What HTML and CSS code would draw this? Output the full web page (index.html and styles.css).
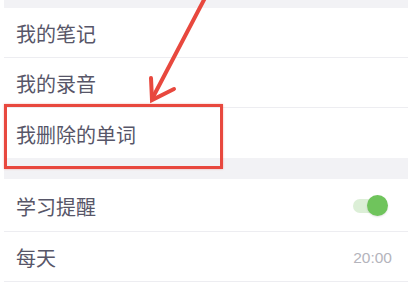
FILE: index.html
```html
<!DOCTYPE html>
<html lang="zh">
<head>
<meta charset="utf-8">
<link rel="stylesheet" href="styles.css">
</head>
<body>
<div class="page">
  <div class="gap-top"></div>
  <div class="group">
    <div class="row">我的笔记</div>
    <div class="row">我的录音</div>
    <div class="row last">我删除的单词</div>
  </div>
  <div class="gap"></div>
  <div class="group">
    <div class="row tall">
      <span>学习提醒</span>
      <span class="toggle"><span class="track"></span><span class="knob"></span></span>
    </div>
    <div class="row">
      <span>每天</span>
      <span class="time">20:00</span>
    </div>
  </div>
  <div class="highlight"></div>
  <svg class="arrow" width="408" height="120" viewBox="0 0 408 120">
    <line x1="206" y1="-4" x2="152" y2="99" stroke="#e8483e" stroke-width="4" stroke-linecap="round"/>
    <polyline points="151,78 152,100 174,89" fill="none" stroke="#e8483e" stroke-width="4" stroke-linecap="round" stroke-linejoin="miter"/>
  </svg>
</div>
</body>
</html>
```
FILE: styles.css
```css
* { box-sizing: border-box; }
html, body { margin: 0; padding: 0; background: #ffffff; }
body {
  font-family: "Noto Sans CJK SC", "Noto Sans", sans-serif;
  width: 408px;
  height: 282px;
  overflow: hidden;
}
.page {
  position: relative;
  width: 408px;
  height: 282px;
  padding: 0 0 0 4px;
}
.gap-top {
  height: 8px;
  background: #f2f2f5;
}
.gap {
  height: 21px;
  background: #f2f2f5;
}
.group { background: #fff; }
.row {
  height: 50px;
  display: flex;
  align-items: center;
  justify-content: space-between;
  padding: 2px 16px 0 12px;
  font-size: 20px;
  color: #575668;
  border-bottom: 1px solid #ededf1;
}
.row.last { border-bottom: none; }
.row.tall { height: 53px; }
.time {
  font-family: "Liberation Sans", Arial, sans-serif;
  font-size: 15.5px;
  color: #b4b4bc;
}
.toggle {
  position: relative;
  width: 35px;
  height: 22px;
  margin-right: 4px;
}
.track {
  position: absolute;
  left: 0;
  top: 4px;
  width: 33px;
  height: 14px;
  border-radius: 7px;
  background: #dcefd7;
}
.knob {
  position: absolute;
  right: 0;
  top: 0;
  width: 21px;
  height: 21px;
  border-radius: 50%;
  background: #6fc45c;
  box-shadow: 0 1px 2px rgba(0,0,0,0.12);
}
.highlight {
  position: absolute;
  left: 4px;
  top: 104px;
  width: 219px;
  height: 65px;
  border: 3.5px solid #e8483e;
  box-shadow: 0 0 2px rgba(232,72,62,0.4);
}
.arrow {
  position: absolute;
  left: 0;
  top: 0;
}
```
